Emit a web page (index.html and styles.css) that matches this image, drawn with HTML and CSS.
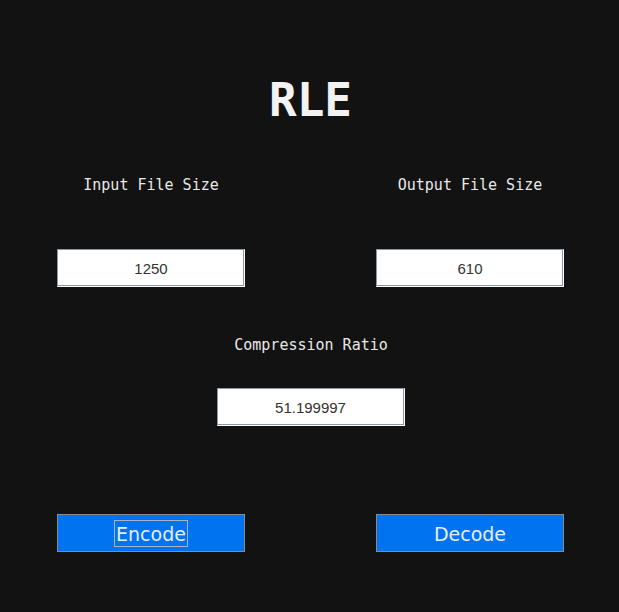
FILE: index.html
```html
<!DOCTYPE html>
<html>
<head>
<meta charset="utf-8">
<link rel="stylesheet" href="styles.css">
</head>
<body>
<div class="app">
  <h1 class="title">RLE</h1>
  <div class="pair">
    <div class="col">
      <div class="label">Input File Size</div>
      <div class="field">1250</div>
    </div>
    <div class="col">
      <div class="label">Output File Size</div>
      <div class="field">610</div>
    </div>
  </div>
  <div class="single">
    <div class="label">Compression Ratio</div>
    <div class="field field-ratio">51.199997</div>
  </div>
  <div class="pair buttons">
    <button class="btn"><span class="focus">Encode</span></button>
    <button class="btn"><span class="nofocus">Decode</span></button>
  </div>
</div>
</body>
</html>
```
FILE: styles.css
```css
html, body {
  margin: 0;
  padding: 0;
  background: #121212;
}
.app {
  width: 619px;
  height: 612px;
  padding-top: 72px;
  box-sizing: border-box;
}
.title {
  margin: 0;
  text-align: center;
  font-family: "DejaVu Sans Mono", monospace;
  font-weight: bold;
  font-size: 46px;
  line-height: 56px;
  color: #f2f2f2;
  padding-left: 2px;
}
.pair {
  display: grid;
  grid-template-columns: 188px 188px;
  column-gap: 131px;
  padding-left: 57px;
  margin-top: 47px;
}
.col {
  display: flex;
  flex-direction: column;
  align-items: center;
}
.label {
  font-family: "DejaVu Sans Mono", monospace;
  font-size: 15px;
  line-height: 20px;
  color: #e8e8e8;
  height: 20px;
  white-space: nowrap;
}
.col .field {
  margin-top: 54px;
}
.field {
  width: 188px;
  height: 38px;
  box-sizing: border-box;
  background: #ffffff;
  border: 1px solid;
  border-color: #8a96a2 #ffffff #ffffff #8a96a2;
  box-shadow: inset -1px -1px 0 #8a96a2;
  font-family: "Liberation Sans", Arial, sans-serif;
  font-size: 15px;
  color: #333333;
  display: flex;
  align-items: center;
  justify-content: center;
  padding-top: 1px;
}
.single {
  display: flex;
  flex-direction: column;
  align-items: center;
  margin-top: 48px;
  padding-left: 3px;
}
.field-ratio {
  margin-top: 33px;
  margin-left: -1px;
}
.buttons {
  margin-top: 88px;
}
.btn {
  width: 188px;
  height: 38px;
  box-sizing: border-box;
  margin: 0;
  padding: 0;
  background: #0074f0;
  border: 1px solid #8a8a8a;
  font-family: "DejaVu Sans", sans-serif;
  font-size: 19px;
  color: #ecebff;
  display: flex;
  align-items: center;
  justify-content: center;
}
.focus {
  border: 1px solid #a8b4c4;
  padding: 2px 1px 1px 1px;
  line-height: 22px;
}
.nofocus {
  border: 1px solid transparent;
  padding: 2px 1px 1px 1px;
  line-height: 22px;
}
```
